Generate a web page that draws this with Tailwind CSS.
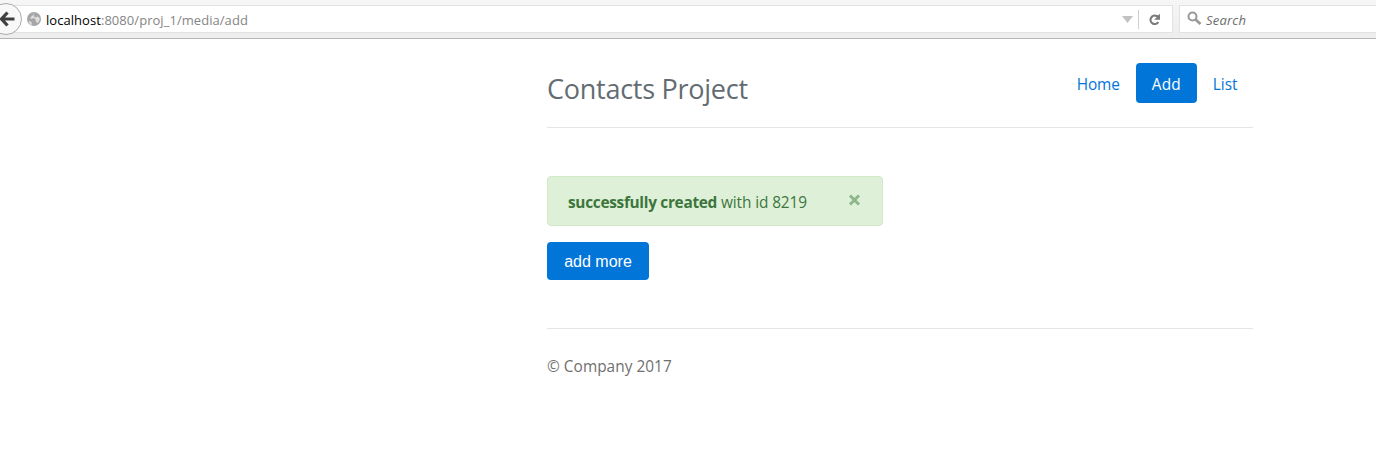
<!DOCTYPE html>
<html lang="en">
<head>
<meta charset="utf-8">
<title>Contacts Project</title>
<script src="https://cdn.jsdelivr.net/npm/@tailwindcss/browser@4"></script>
</head>
<body class="h-[473px] overflow-hidden bg-white font-['Open_Sans','Noto_Sans',sans-serif] text-[15.4px] leading-6">
<div class="flex h-[39px] items-start overflow-hidden border-b border-[#b6b6b6] bg-linear-to-b from-[#f6f6f6] to-[#ededed]">
  <div class="relative z-10 -ml-[10px] mt-[3px] size-8 shrink-0 rounded-full border border-[#ababab] bg-[#f8f8f8]">
    <svg class="absolute left-[8px] top-[7px]" width="16" height="16" viewBox="0 0 16 16" fill="none" stroke="#404040" stroke-width="3.200"><path d="M8.500 1.500 2.500 8l6 6.500M3 8h12.500"/></svg>
  </div>
  <div class="-ml-[10px] mt-[5px] flex h-7 w-[1161px] shrink-0 items-center border border-[#e2e2e2] bg-white pl-[13px]">
    <svg class="shrink-0" width="16" height="16" viewBox="0 0 16 16"><circle cx="8" cy="8" r="7" fill="#a6a6a6"/><path d="M9 1.500 7.500 4.500 9 6.500l3-1L14 8l-2 4-2-1-.5-3L7 7l-1 1L4 7l3-3zM3 10l2.500 1L6 14.500 3 12z" fill="#dedede"/></svg>
    <span class="relative top-px ml-[4px] whitespace-nowrap text-[13px] tracking-[0.05px] text-[#858585]"><span class="text-black">localhost</span>:8080/proj_1/media/add</span>
    <svg class="ml-auto" width="11" height="7" viewBox="0 0 11 7"><path d="M0 0h11L5.500 7z" fill="#c2c2c2"/></svg>
    <div class="ml-[5px] h-[19px] w-px bg-[#cfcfcf]"></div>
    <svg class="ml-[9px] mr-[11px]" width="13" height="13" viewBox="0 0 13 13"><path d="M10.300 9A4.200 4.200 0 1 1 8.500 3H10" fill="none" stroke="#7c7c7c" stroke-width="2.200"/><path d="M12 .8v6H6.200L8 5l1.500-2z" fill="#7c7c7c"/></svg>
  </div>
  <div class="ml-[6px] mt-[5px] flex h-7 w-[220px] shrink-0 items-center border border-[#e2e2e2] bg-white pl-[7px]">
    <svg class="-mt-px" width="15" height="15" viewBox="0 0 15 15" fill="none" stroke="#999"><circle cx="5.500" cy="5.500" r="4" stroke-width="2"/><path d="m8.500 8.500 5 4.500" stroke-width="2.800"/></svg>
    <span class="relative top-px ml-[4px] text-[13px] italic tracking-[0.2px] text-[#6d6d6d]">Search</span>
  </div>
</div>
<main class="ml-[547px] w-[706px]">
  <header class="flex h-[89px] justify-between border-b border-[#e5e5e5] pt-6">
    <h3 class="mt-[9px] text-[27px] leading-[34px] tracking-[-0.26px] text-[#636c72]">Contacts Project</h3>
    <nav class="flex h-10 text-[#0275d8]">
      <a class="px-4 pt-[10px] tracking-[-0.1px]">Home</a>
      <a class="w-[61px] rounded bg-[#0275d8] pt-[10px] text-center tracking-[0.1px] text-white">Add</a>
      <a class="pl-4 pr-[15.500px] pt-[10px]">List</a>
    </nav>
  </header>
  <div class="mt-12 flex h-[50px] w-[336px] items-center rounded border border-[#d0e9c6] bg-[#dff0d8] pl-5 text-[#3c763d]">
    <span class="mt-[4px] whitespace-nowrap tracking-[-0.1px]"><strong class="font-bold tracking-[-0.3px]">successfully created</strong> with id 8219</span>
    <svg class="-mt-[2px] ml-auto mr-[21px]" width="13" height="12" viewBox="0 0 13 12" stroke="#8fb68b" stroke-width="3"><path d="m2 1.500 9 9M11 1.500l-9 9"/></svg>
  </div>
  <button class="mt-4 block h-[38px] w-[102px] rounded bg-[#0275d8] pt-[2px] text-center font-['Liberation_Sans',sans-serif] text-base text-white">add more</button>
  <footer class="mt-12 border-t border-[#e5e5e5] pt-[26px] text-[#6f6f6f]"><p class="tracking-[0.03px]">© Company 2017</p></footer>
</main>
</body>
</html>
